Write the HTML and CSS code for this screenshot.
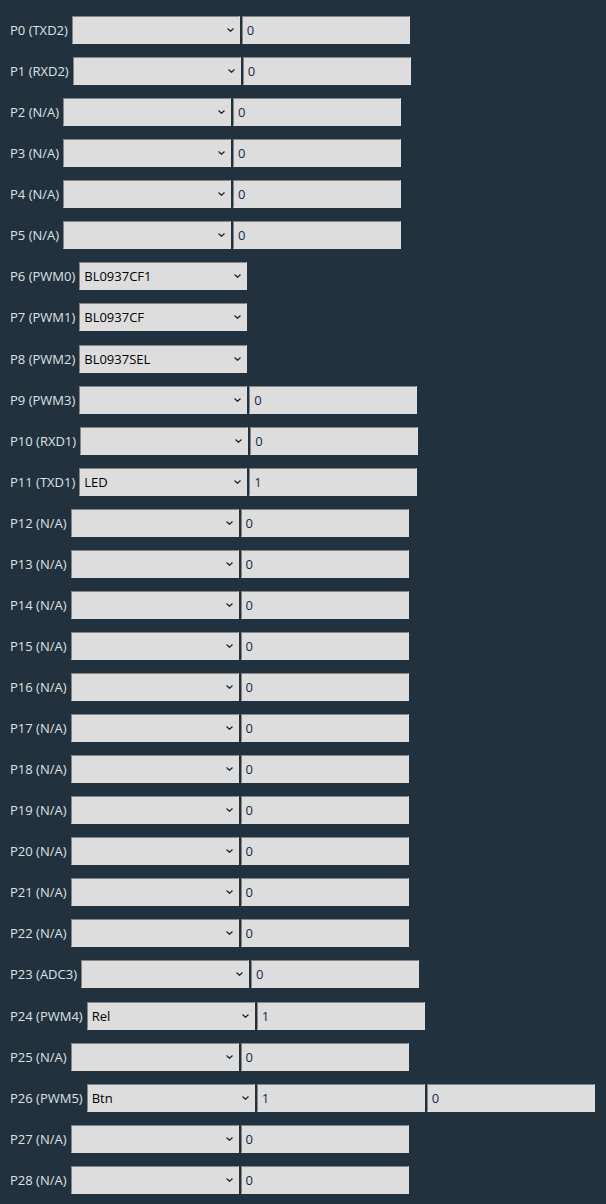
FILE: index.html
```html
<!DOCTYPE html>
<html>
<head>
<meta charset="utf-8">
<link rel="stylesheet" href="styles.css">
</head>
<body>
<div class="pins" id="pins"></div>
<script>
var rows = [
 ["P0 (TXD2)","",["0"]],["P1 (RXD2)","",["0"]],["P2 (N/A)","",["0"]],["P3 (N/A)","",["0"]],
 ["P4 (N/A)","",["0"]],["P5 (N/A)","",["0"]],["P6 (PWM0)","BL0937CF1",[]],["P7 (PWM1)","BL0937CF",[]],
 ["P8 (PWM2)","BL0937SEL",[]],["P9 (PWM3)","",["0"]],["P10 (RXD1)","",["0"]],["P11 (TXD1)","LED",["1"]],
 ["P12 (N/A)","",["0"]],["P13 (N/A)","",["0"]],["P14 (N/A)","",["0"]],["P15 (N/A)","",["0"]],
 ["P16 (N/A)","",["0"]],["P17 (N/A)","",["0"]],["P18 (N/A)","",["0"]],["P19 (N/A)","",["0"]],
 ["P20 (N/A)","",["0"]],["P21 (N/A)","",["0"]],["P22 (N/A)","",["0"]],["P23 (ADC3)","",["0"]],
 ["P24 (PWM4)","Rel",["1"]],["P25 (N/A)","",["0"]],["P26 (PWM5)","Btn",["1","0"]],["P27 (N/A)","",["0"]],
 ["P28 (N/A)","",["0"]]
];
var c = document.getElementById("pins");
rows.forEach(function(r){
  var d = document.createElement("div"); d.className = "row";
  var l = document.createElement("span"); l.className = "lbl"; l.textContent = r[0]; d.appendChild(l);
  var w = document.createElement("span"); w.className = "sel";
  var s = document.createElement("select");
  var o = document.createElement("option"); o.textContent = r[1]; s.appendChild(o);
  w.appendChild(s);
  w.insertAdjacentHTML("beforeend",'<svg class="chev" viewBox="0 0 7 4" width="7" height="4"><path d="M0.5 0.5 L3.5 3.3 L6.5 0.5" fill="none" stroke="#222" stroke-width="1.2"/></svg>');
  d.appendChild(w);
  r[2].forEach(function(v){
    var i = document.createElement("input"); i.type = "text"; i.value = v; i.className = "val"; d.appendChild(i);
  });
  c.appendChild(d);
});
</script>
</body>
</html>
```
FILE: styles.css
```css
body {
  margin: 0;
  background: #22313e;
  font-family: "Open Sans", "Noto Sans", sans-serif;
  font-size: 13px;
  color: #dde2e6;
}
.pins {
  display: flex;
  flex-direction: column;
  gap: 13.07px;
  padding: 16px 0 0 10px;
}
.row {
  display: flex;
  align-items: center;
  height: 28px;
}
.lbl {
  white-space: nowrap;
  margin-right: 4px;
}
.sel {
  position: relative;
  display: block;
  width: 168px;
  height: 28px;
}
.sel select {
  appearance: none;
  -webkit-appearance: none;
  display: block;
  width: 100%;
  height: 100%;
  box-sizing: border-box;
  margin: 0;
  border: 1px solid;
  border-color: #858585 #dedede #dedede #858585;
  border-radius: 0;
  background: #dddddd;
  font-family: "Open Sans", "Noto Sans", sans-serif;
  font-size: 13px;
  color: #000;
  padding: 0 0 0 4px;
  outline: none;
}
.chev {
  position: absolute;
  right: 6px;
  top: 12px;
  pointer-events: none;
}
.val {
  display: block;
  width: 168px;
  height: 28px;
  box-sizing: border-box;
  margin: 0 0 0 2px;
  border: 1px solid;
  border-color: #858585 #dedede #dedede #858585;
  border-radius: 0;
  background: #dddddd;
  font-family: "Open Sans", "Noto Sans", sans-serif;
  font-size: 13px;
  color: #13294b;
  padding: 0 0 0 4px;
  outline: none;
}
```
